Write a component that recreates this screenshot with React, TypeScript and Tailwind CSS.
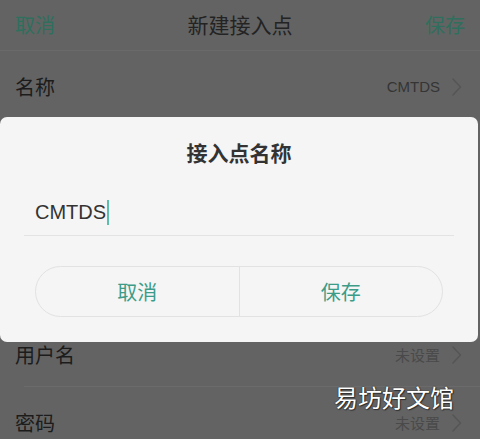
import React from "react";

const font = { fontFamily: '"Noto Sans CJK SC", "Noto Sans", sans-serif' };

function Chevron({ color = "#555555" }: { color?: string }) {
  return (
    <svg width="11" height="20" viewBox="0 0 11 20" className="shrink-0">
      <polyline points="1.5,1.5 9.5,10 1.5,18.5" fill="none" stroke={color} strokeWidth="1.4" />
    </svg>
  );
}

function Row({ label, value, latin = false }: { label: string; value: string; latin?: boolean }) {
  return (
    <div className="h-[67px] pt-[5px] flex items-center pl-[15px] pr-[18px]">
      <span className="text-[20px] text-[#1c1c1c] flex-1">{label}</span>
      <span
        className={`text-[15px] mr-[11px] ${latin ? "text-[#353535]" : "text-[#4a4a4a]"}`}
        style={latin ? { fontFamily: '"Liberation Sans", Arial, sans-serif' } : undefined}
      >
        {value}
      </span>
      <Chevron />
    </div>
  );
}

export default function App() {
  return (
    <div className="relative w-[480px] h-[439px] overflow-hidden bg-[#636363]" style={font}>
      {/* header */}
      <div className="h-[51px] flex items-center justify-between px-[15px] border-b border-[#6a6a6a]">
        <span className="text-[20px] text-[#2f6f5d]">取消</span>
        <span className="text-[21px] text-[#232323]">新建接入点</span>
        <span className="text-[20px] text-[#2f6f5d]">保存</span>
      </div>
      <Row label="名称" value="CMTDS" latin />
      <Row label="APN" value="" />
      <Row label="代理" value="" />
      <Row label="端口" value="" />
      <Row label="用户名" value="未设置" />
      <div className="ml-[24px] h-px bg-[#6b6b6b]" />
      <Row label="密码" value="未设置" />

      {/* dialog */}
      <div className="absolute left-0 top-[117px] w-[478px] h-[225px] bg-[#f5f5f5] rounded-[7px] flex flex-col">
        <div className="h-[72px] flex items-center justify-center">
          <span className="text-[21px] font-bold text-[#333333]">接入点名称</span>
        </div>
        <div className="mx-[24px] h-[47px] flex items-center pl-[11px] border-b border-[#e3e3e3]">
          <span className="text-[20px] text-[#333333]" style={{ fontFamily: '"Liberation Sans", Arial, sans-serif' }}>
            CMTDS
          </span>
          <span className="ml-[1px] w-[2px] h-[25px] bg-[#5bbfae]" />
        </div>
        <div className="mt-[30px] mx-[35px] h-[51px] rounded-full border border-[#e2e2e2] flex">
          <div className="flex-1 flex items-center justify-center border-r border-[#e2e2e2]">
            <span className="text-[20px] text-[#3c9c88]">取消</span>
          </div>
          <div className="flex-1 flex items-center justify-center">
            <span className="text-[20px] text-[#3c9c88]">保存</span>
          </div>
        </div>
      </div>

      {/* watermark */}
      <div
        className="absolute left-[334px] top-[385px] text-[24px] text-white leading-none"
        style={{ textShadow: "0 0 1px #222, 0 0 1px #222, 1px 1px 1px #333" }}
      >
        易坊好文馆
      </div>
    </div>
  );
}
